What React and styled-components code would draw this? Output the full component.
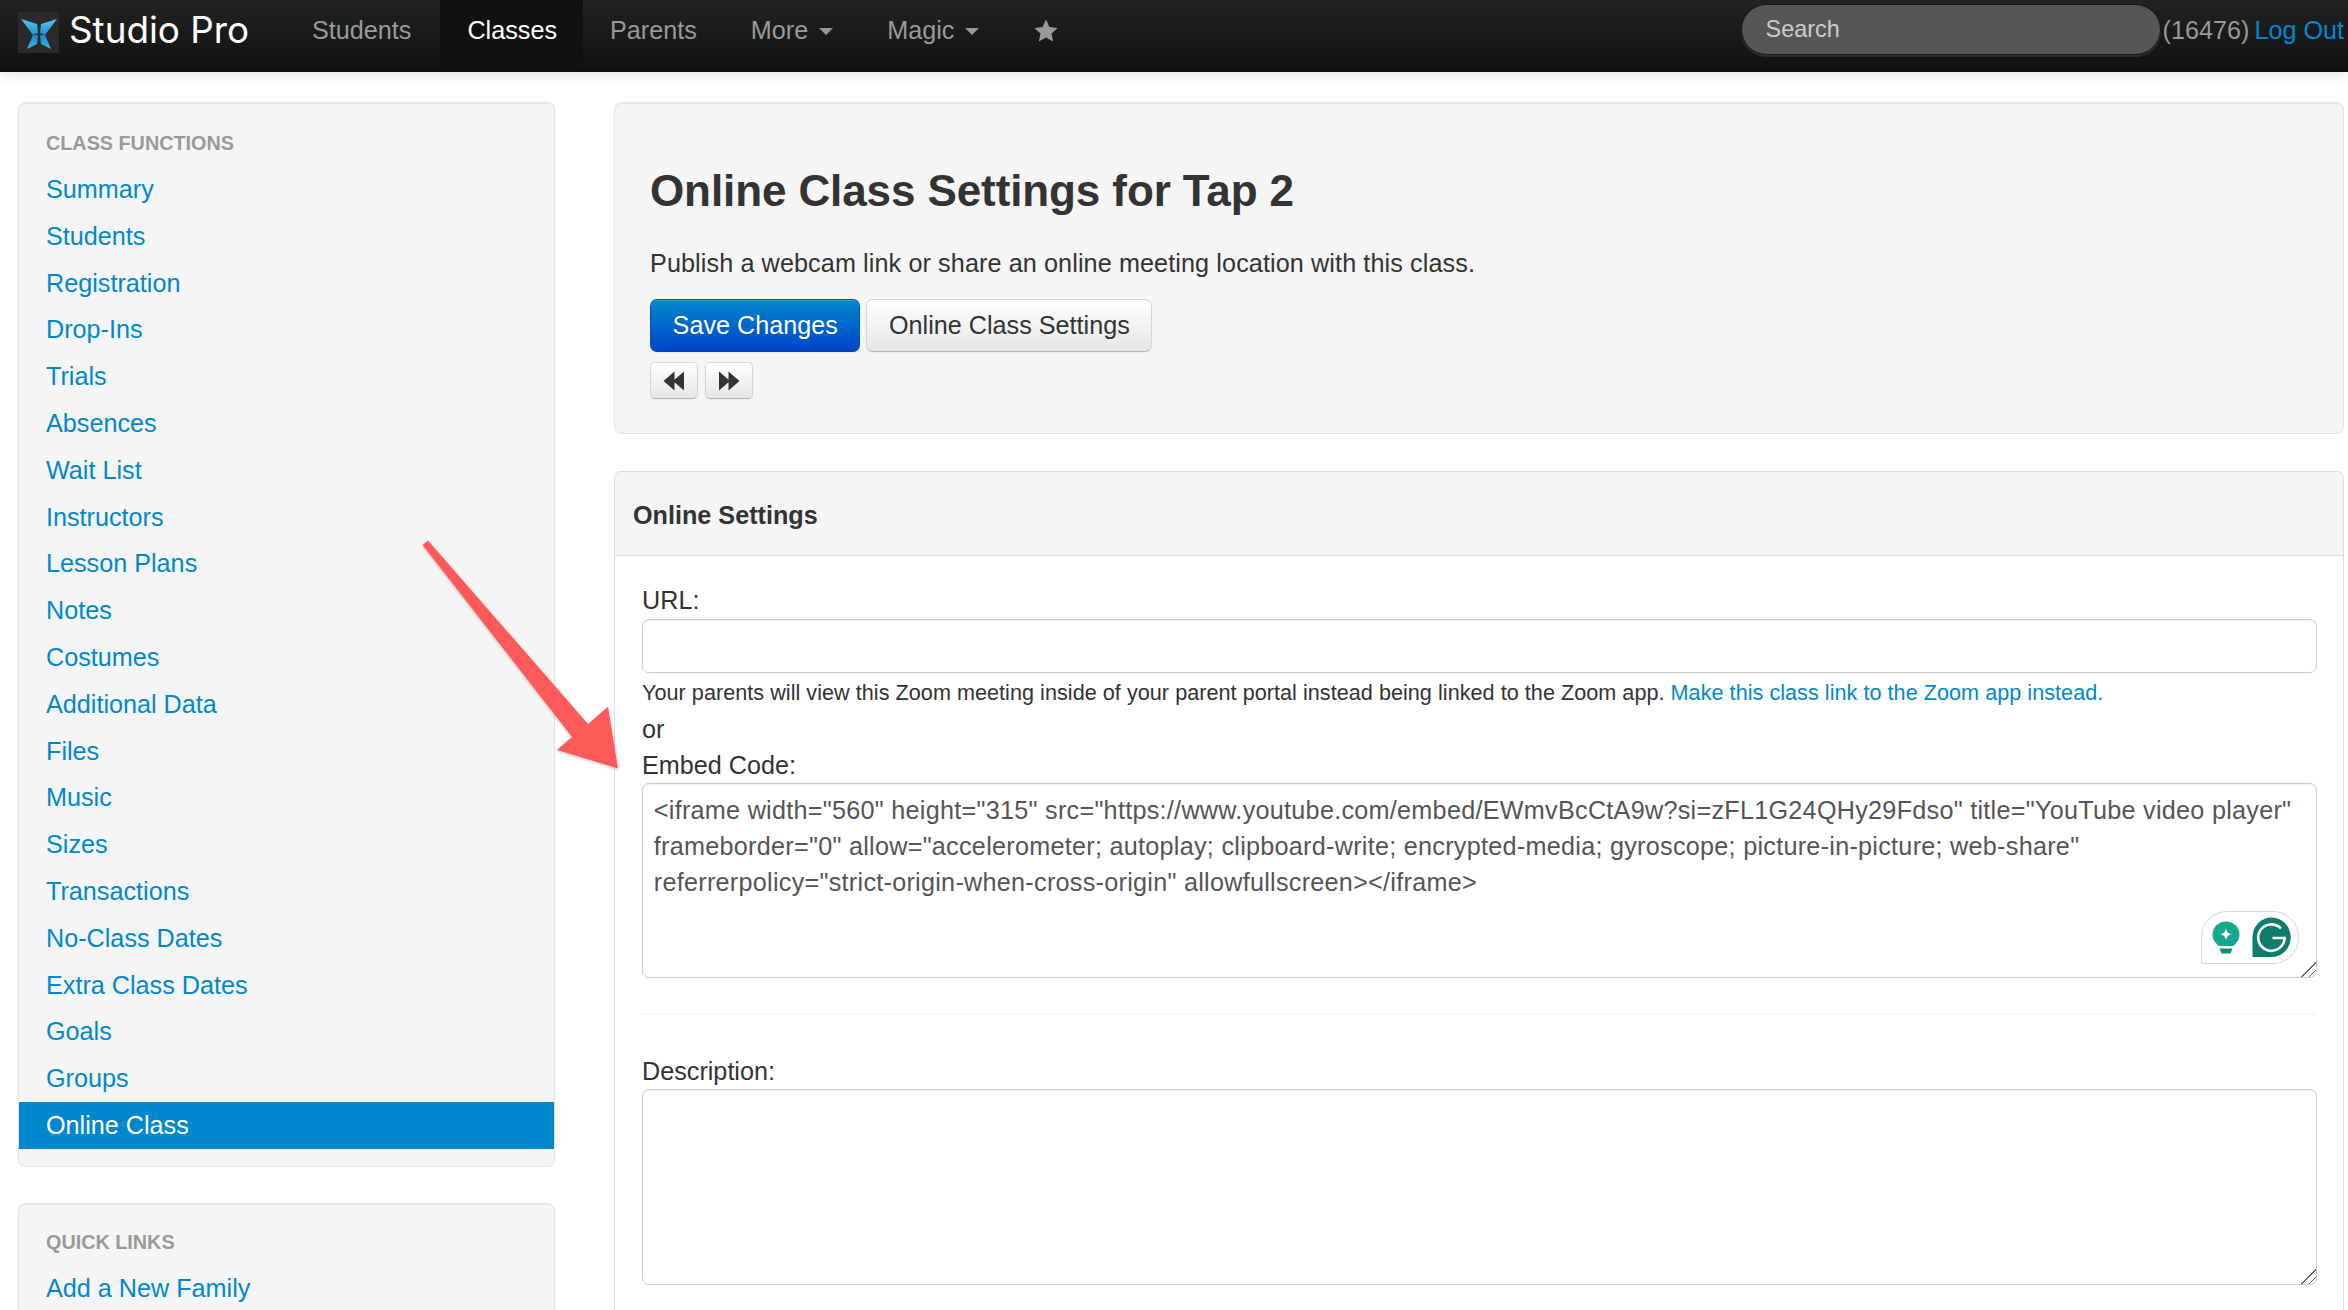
import React from "react";
import styled, { createGlobalStyle } from "styled-components";

const GlobalStyle = createGlobalStyle`
  html, body {
    margin: 0;
    height: 100%;
    overflow: hidden;
    background: #fff;
    font-family: "Liberation Sans", Arial, sans-serif;
    font-size: 25.2px;
    line-height: 36px;
    color: #333;
  }
  * { box-sizing: border-box; }
`;

const Page = styled.div`
  position: relative;
  height: 1310px;
  overflow: hidden;
`;

const Navbar = styled.header`
  display: flex;
  align-items: stretch;
  height: 72px;
  background: linear-gradient(to bottom, #222, #111);
  box-shadow: 0 1px 14px rgba(0, 0, 0, 0.14);
  border-bottom: 1px solid #0c0c0c;
  position: relative;
`;

const Brand = styled.div`
  display: flex;
  align-items: flex-start;
  width: 285px;
  padding: 12px 0 0 18px;
`;

const LogoBox = styled.div`
  width: 41px;
  height: 41px;
  background: #2a2a2a;
  display: flex;
  align-items: center;
  justify-content: center;
`;

const BrandName = styled.span`
  margin: -6px 0 0 10px;
  font-family: Inter, sans-serif;
  font-size: 36.8px;
  line-height: 48px;
  color: #fff;
`;

const NavItems = styled.nav`
  display: flex;
  align-items: stretch;
`;

const NavItem = styled.a`
  display: flex;
  align-items: flex-start;
  gap: 11px;
  padding: 12px ${(p) => p.$right || 27}px 0 27px;
  color: ${(p) => (p.$active ? "#fff" : "#999")};
  background: ${(p) => (p.$active ? "#111" : "transparent")};
`;

const StarSlot = styled.span`
  display: block;
  margin: 4px 0 0 1px;
`;

const Caret = styled.i`
  width: 0;
  height: 0;
  margin-top: 16px;
  border-left: 7px solid transparent;
  border-right: 7px solid transparent;
  border-top: 7px solid #999;
`;

const NavRight = styled.div`
  display: flex;
  align-items: flex-start;
  margin-left: auto;
  padding-right: 4px;
`;

const SearchBox = styled.div`
  width: 420px;
  height: 51px;
  margin-top: 4px;
  padding-left: 24px;
  border-radius: 26px;
  border: 1px solid #151515;
  background: #565656;
  box-shadow: 0 2px 0 rgba(255, 255, 255, 0.1);
  color: #ccc;
  font-size: 23.4px;
  line-height: 48px;
`;

const Counter = styled.span`
  margin: 12px 0 0 2px;
  color: #999;
`;

const LogOut = styled.a`
  margin: 12px 0 0 5px;
  color: #0088cc;
`;

const Content = styled.div`
  display: grid;
  grid-template-columns: 537px 1fr;
  column-gap: 59px;
  padding: 30px 4px 0 18px;
`;

const Sidebar = styled.aside`
  display: flex;
  flex-direction: column;
  gap: 36px;
`;

const Well = styled.div`
  background: #f5f5f5;
  border: 1px solid #e3e3e3;
  border-radius: 7px;
  box-shadow: inset 0 1px 1px rgba(0, 0, 0, 0.05);
`;

const NavList = styled(Well)`
  padding: ${(p) => p.$top}px 0 17px;
`;

const NavHeader = styled.div`
  padding: 0 27px;
  height: 36px;
  margin-bottom: 5px;
  font-size: 19.8px;
  line-height: 36px;
  font-weight: bold;
  text-transform: uppercase;
  color: #999;
  text-shadow: 0 1px 0 rgba(255, 255, 255, 0.5);
`;

const NavLink = styled.a`
  display: block;
  height: 46.8px;
  padding: 0 27px;
  line-height: 46.8px;
  color: ${(p) => (p.$active ? "#fff" : "#0088cc")};
  background: ${(p) => (p.$active ? "#0088cc" : "transparent")};
`;

const Main = styled.main`
  display: flex;
  flex-direction: column;
  gap: 37px;
  min-width: 0;
`;

const Hero = styled(Well)`
  padding: 52px 35px 34px;
`;

const Title = styled.h3`
  margin: 0 0 18px;
  font-size: 44px;
  line-height: 72px;
  font-weight: bold;
  letter-spacing: -0.1px;
  color: #333;
`;

const Lead = styled.p`
  margin: 0 0 18px;
  letter-spacing: 0.1px;
`;

const ButtonRow = styled.div`
  display: flex;
  gap: ${(p) => p.$gap}px;
  margin-bottom: ${(p) => p.$bottom || 0}px;
`;

const Button = styled.button`
  height: 53px;
  padding: 0 21.6px 2px;
  font: inherit;
  line-height: 36px;
  border-radius: 7px;
  border: 1px solid ${(p) => (p.$primary ? "#0055bb" : "#d6d6d6")};
  border-bottom-color: ${(p) => (p.$primary ? "#0044aa" : "#b3b3b3")};
  color: ${(p) => (p.$primary ? "#fff" : "#333")};
  background: ${(p) =>
    p.$primary
      ? "linear-gradient(to bottom, #0088cc, #0044cc)"
      : "linear-gradient(to bottom, #fff, #e6e6e6)"};
  box-shadow: inset 0 1px 0 rgba(255, 255, 255, 0.2), 0 1px 2px rgba(0, 0, 0, 0.05);
`;

const MiniButton = styled(Button)`
  display: flex;
  align-items: center;
  justify-content: center;
  width: 48px;
  height: 37px;
  padding: 0;
  border-radius: 5px;
`;

const SettingsBox = styled.section`
  border: 1px solid #ddd;
  border-bottom: none;
  border-radius: 7px 7px 0 0;
`;

const SettingsHead = styled.div`
  height: 84px;
  padding: 0 18px;
  background: #f5f5f5;
  border-bottom: 1px solid #ddd;
  border-radius: 7px 7px 0 0;
  font-weight: bold;
  line-height: 86px;
  color: #333;
`;

const SettingsBody = styled.div`
  padding: 26px 26px 40px 27px;
`;

const FieldLabel = styled.div`
  height: 36px;
`;

const HelpText = styled.div`
  margin-top: 2px;
  height: 36px;
  font-size: 21.6px;
  letter-spacing: 0.04px;
  white-space: nowrap;
`;

const TextLink = styled.a`
  color: #0088cc;
`;

const UrlInput = styled.input`
  display: block;
  width: 100%;
  height: 54px;
  margin-top: 1px;
  border: 1px solid #ccc;
  border-radius: 7px;
  background: #fff;
  box-shadow: inset 0 1px 1px rgba(0, 0, 0, 0.075);
`;

const AreaWrap = styled.div`
  position: relative;
`;

const TextArea = styled.textarea`
  display: block;
  width: 100%;
  height: ${(p) => p.$h}px;
  padding: 8px 10.8px;
  border: 1px solid #ccc;
  border-radius: 7px;
  background: #fff;
  font: inherit;
  line-height: 36px;
  letter-spacing: 0.27px;
  color: #555;
  outline: none;
  resize: vertical;
  box-shadow: inset 0 1px 1px rgba(0, 0, 0, 0.075);

  &::-webkit-resizer {
    background: linear-gradient(
      135deg,
      transparent 50%,
      #666 50%,
      #666 56%,
      transparent 56%,
      transparent 74%,
      #666 74%,
      #666 80%,
      transparent 80%
    );
  }
`;

const Grammarly = styled.div`
  position: absolute;
  right: 18px;
  bottom: 14px;
  width: 98px;
  height: 53px;
  display: flex;
  align-items: center;
  justify-content: space-between;
  padding: 0 7px 0 10px;
  background: #fff;
  border: 1px solid #d5d8de;
  border-radius: 26px 26px 26px 0;
`;

const Divider = styled.hr`
  margin: 36px 0 38px;
  border: none;
  border-top: 1px solid #eee;
`;

const ArrowLayer = styled.svg`
  position: absolute;
  left: 0;
  top: 0;
  pointer-events: none;
`;

const classLinks = [
  "Summary",
  "Students",
  "Registration",
  "Drop-Ins",
  "Trials",
  "Absences",
  "Wait List",
  "Instructors",
  "Lesson Plans",
  "Notes",
  "Costumes",
  "Additional Data",
  "Files",
  "Music",
  "Sizes",
  "Transactions",
  "No-Class Dates",
  "Extra Class Dates",
  "Goals",
  "Groups",
  "Online Class",
];

const embedCode =
  '<iframe width="560" height="315" src="https://www.youtube.com/embed/EWmvBcCtA9w?si=zFL1G24QHy29Fdso" title="YouTube video player" frameborder="0" allow="accelerometer; autoplay; clipboard-write; encrypted-media; gyroscope; picture-in-picture; web-share" referrerpolicy="strict-origin-when-cross-origin" allowfullscreen></iframe>';

const LogoMark = () => (
  <svg width="38" height="38" viewBox="0 0 38 38">
    <defs>
      <linearGradient id="wingTop" x1="0" y1="0" x2="0" y2="1">
        <stop offset="0" stopColor="#5cc6ee" />
        <stop offset="1" stopColor="#1a8fd0" />
      </linearGradient>
      <linearGradient id="wingLow" x1="0" y1="0" x2="0" y2="1">
        <stop offset="0" stopColor="#1f84c4" />
        <stop offset="1" stopColor="#2fc0ea" />
      </linearGradient>
    </defs>
    <path d="M1 5 L17 10 L18 19 L13 21 Z" fill="url(#wingTop)" />
    <path d="M37 5 L21 10 L20 19 L25 21 Z" fill="url(#wingTop)" />
    <path d="M13 21 L18 21 L17 30 L7 35 Z" fill="url(#wingLow)" />
    <path d="M25 21 L20 21 L21 30 L31 35 Z" fill="url(#wingLow)" />
  </svg>
);

const Star = () => (
  <svg width="24" height="24" viewBox="0 0 24 24">
    <path
      d="M12 0.5 L15.4 8 L23.6 8.9 L17.5 14.4 L19.2 22.6 L12 18.4 L4.8 22.6 L6.5 14.4 L0.4 8.9 L8.6 8 Z"
      fill="#999"
    />
  </svg>
);

const Rewind = ({ flip }) => (
  <svg width="22" height="20" viewBox="0 0 22 20" style={flip ? { transform: "scaleX(-1)" } : undefined}>
    <path d="M0.5 10 L11.5 0.5 L11.5 19.5 Z M10 10 L21 0.5 L21 19.5 Z" fill="#333" />
  </svg>
);

const BulbIcon = () => (
  <svg width="28" height="34" viewBox="0 0 28 34">
    <path
      d="M14 0.5 C21.5 0.5 27.5 6.3 27.5 13.6 C27.5 18.6 24.6 22 21.4 25 L6.6 25 C3.4 22 0.5 18.6 0.5 13.6 C0.5 6.3 6.5 0.5 14 0.5 Z"
      fill="#15a88f"
    />
    <path d="M7.5 27.5 H20.5 L18.5 32.5 H9.5 Z" fill="#138a75" />
    <path
      d="M14 7 C14.8 11 16 12.4 20 13.3 C16 14.2 14.8 15.5 14 19.5 C13.2 15.5 12 14.2 8 13.3 C12 12.4 13.2 11 14 7 Z"
      fill="#fff"
    />
  </svg>
);

const GrammarlyIcon = () => (
  <svg width="39" height="41" viewBox="0 0 39 41">
    <path d="M19.5 0.5 A19 19.5 0 1 1 19.5 40 H0.5 V20 A19 19.5 0 0 1 19.5 0.5 Z" fill="#0f7d6c" />
    <path
      d="M29 11.5 A13.2 13.2 0 1 0 32.6 21 H20.5"
      fill="none"
      stroke="#fff"
      strokeWidth="2.6"
    />
  </svg>
);

export default function App() {
  return (
    <Page>
      <GlobalStyle />
      <Navbar>
        <Brand>
          <LogoBox>
            <LogoMark />
          </LogoBox>
          <BrandName>Studio Pro</BrandName>
        </Brand>
        <NavItems>
          <NavItem $right={29}>Students</NavItem>
          <NavItem $active $right={26}>Classes</NavItem>
          <NavItem>Parents</NavItem>
          <NavItem>
            More
            <Caret />
          </NavItem>
          <NavItem>
            Magic
            <Caret />
          </NavItem>
          <NavItem>
            <StarSlot>
              <Star />
            </StarSlot>
          </NavItem>
        </NavItems>
        <NavRight>
          <SearchBox>Search</SearchBox>
          <Counter>(16476)</Counter>
          <LogOut>Log Out</LogOut>
        </NavRight>
      </Navbar>

      <Content>
        <Sidebar>
          <NavList $top={22}>
            <NavHeader>Class Functions</NavHeader>
            {classLinks.map((name) => (
              <NavLink key={name} $active={name === "Online Class"}>
                {name}
              </NavLink>
            ))}
          </NavList>
          <NavList $top={20}>
            <NavHeader>Quick Links</NavHeader>
            <NavLink>Add a New Family</NavLink>
          </NavList>
        </Sidebar>

        <Main>
          <Hero>
            <Title>Online Class Settings for Tap 2</Title>
            <Lead>Publish a webcam link or share an online meeting location with this class.</Lead>
            <ButtonRow $gap={6} $bottom={10}>
              <Button $primary>Save Changes</Button>
              <Button>Online Class Settings</Button>
            </ButtonRow>
            <ButtonRow $gap={7}>
              <MiniButton>
                <Rewind />
              </MiniButton>
              <MiniButton>
                <Rewind flip />
              </MiniButton>
            </ButtonRow>
          </Hero>

          <SettingsBox>
            <SettingsHead>Online Settings</SettingsHead>
            <SettingsBody>
              <FieldLabel>URL:</FieldLabel>
              <UrlInput />
              <HelpText>
                Your parents will view this Zoom meeting inside of your parent portal instead being linked to the
                Zoom app. <TextLink>Make this class link to the Zoom app instead.</TextLink>
              </HelpText>
              <FieldLabel>or</FieldLabel>
              <FieldLabel>Embed Code:</FieldLabel>
              <AreaWrap>
                <TextArea $h={195} readOnly spellCheck={false} value={embedCode} />
                <Grammarly>
                  <BulbIcon />
                  <GrammarlyIcon />
                </Grammarly>
              </AreaWrap>
              <Divider />
              <FieldLabel>Description:</FieldLabel>
              <AreaWrap>
                <TextArea $h={196} readOnly spellCheck={false} value="" />
              </AreaWrap>
            </SettingsBody>
          </SettingsBox>
        </Main>
      </Content>

      <ArrowLayer width="2348" height="1310" viewBox="0 0 2348 1310">
        <defs>
          <filter id="arrowShadow" x="-10%" y="-10%" width="120%" height="120%">
            <feDropShadow dx="0" dy="1" stdDeviation="1.5" floodColor="#000" floodOpacity="0.25" />
          </filter>
        </defs>
        <path
          d="M422.5 545 L428 540.5 L588 724 L608 706.7 L618 768.5 L557 750 L572 737 Z"
          fill="#ff5a5a"
          filter="url(#arrowShadow)"
        />
      </ArrowLayer>
    </Page>
  );
}
